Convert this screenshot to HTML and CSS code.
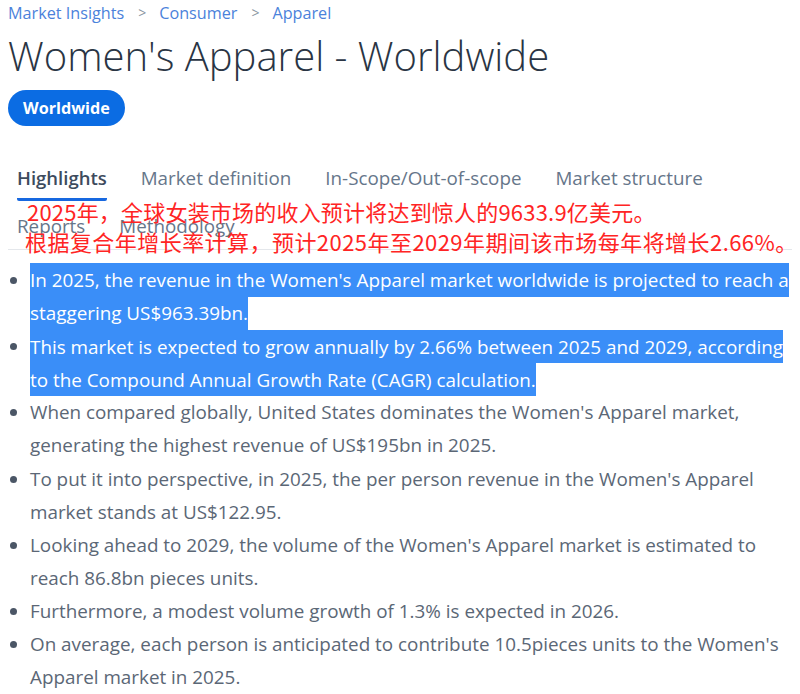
FILE: index.html
```html
<!DOCTYPE html>
<html lang="en">
<head>
<meta charset="utf-8">
<title>Women's Apparel - Worldwide</title>
<link rel="stylesheet" href="styles.css">
</head>
<body>
<div class="page">
  <nav class="crumbs">
    <a class="crumb" href="#">Market Insights</a>
    <span class="sep">&gt;</span>
    <a class="crumb" href="#">Consumer</a>
    <span class="sep">&gt;</span>
    <a class="crumb" href="#">Apparel</a>
  </nav>
  <h1 class="title">Women's Apparel - Worldwide</h1>
  <button class="pill">Worldwide</button>

  <div class="tabs-wrap">
    <ul class="tabs">
      <li class="tab active">Highlights</li>
      <li class="tab">Market definition</li>
      <li class="tab">In-Scope/Out-of-scope</li>
      <li class="tab">Market structure</li>
      <li class="tab">Reports</li>
      <li class="tab">Methodology</li>
    </ul>
    <div class="overlay">
      <div class="ov-line ov-1">2025年，全球女装市场的收入预计将达到惊人的9633.9亿美元。</div>
      <div class="ov-line ov-2">根据复合年增长率计算，预计2025年至2029年期间该市场每年将增长2.66%。</div>
    </div>
  </div>

  <ul class="facts">
    <li><span class="sel">In 2025, the revenue in the Women's Apparel market worldwide is projected to reach a staggering US$963.39bn.</span></li>
    <li><span class="sel">This market is expected to grow annually by 2.66% between 2025 and 2029, according to the Compound Annual Growth Rate (CAGR) calculation.</span></li>
    <li>When compared globally, United States dominates the Women's Apparel market, generating the highest revenue of US$195bn in 2025.</li>
    <li>To put it into perspective, in 2025, the per person revenue in the Women's Apparel market stands at US$122.95.</li>
    <li>Looking ahead to 2029, the volume of the Women's Apparel market is estimated to reach 86.8bn pieces units.</li>
    <li>Furthermore, a modest volume growth of 1.3% is expected in 2026.</li>
    <li>On average, each person is anticipated to contribute 10.5pieces units to the Women's Apparel market in 2025.</li>
  </ul>
</div>
</body>
</html>
```

FILE: styles.css
```css
html, body {
  margin: 0;
  padding: 0;
  background: #ffffff;
}

body {
  font-family: "Open Sans", "Noto Sans", sans-serif;
  color: #5b6776;
}

.page {
  padding: 0 8px;
}

.crumbs {
  display: flex;
  align-items: center;
  height: 26px;
  font-size: 16.2px;
  line-height: 26px;
}

.crumb {
  color: #4b82db;
  text-decoration: none;
}

.sep {
  color: #8a96a3;
  font-size: 14px;
  margin: 0 13px 0 14px;
}

.title {
  margin: 4px 0 0;
  font-size: 40px;
  font-weight: 300;
  line-height: 52px;
  color: #2a3544;
}

.pill {
  display: block;
  margin-top: 8px;
  height: 36px;
  padding: 0 15px;
  border: none;
  border-radius: 18px;
  background: #0b6ce3;
  color: #ffffff;
  font-family: "Open Sans", sans-serif;
  font-size: 16.2px;
  font-weight: 700;
  line-height: 36px;
}

.tabs-wrap {
  position: relative;
  margin-top: 30px;
  border-bottom: 1px solid #e4e7eb;
}

.tabs {
  list-style: none;
  margin: 0;
  padding: 0 0 0 9px;
  display: flex;
  flex-wrap: wrap;
  column-gap: 34px;
  row-gap: 3px;
}

.tab {
  padding: 8px 0 6px;
  line-height: 28px;
  font-size: 18.8px;
  color: #66768a;
  border-bottom: 3px solid transparent;
}

.tab.active {
  font-size: 18.5px;
  color: #3d4b5d;
  font-weight: 600;
  border-bottom-color: #1768e0;
  border-radius: 0 0 2px 2px;
}

.overlay {
  position: absolute;
  left: 19px;
  top: 40px;
  color: #ff2424;
  font-family: "Noto Sans CJK SC", "Noto Sans", sans-serif;
  font-size: 22px;
  line-height: 30px;
  white-space: nowrap;
}

.ov-1 {
  letter-spacing: 0.2px;
}

.ov-2 {
  margin-left: -2px;
  letter-spacing: 0.45px;
}

.facts {
  margin: 14px 0 0;
  padding: 0 0 0 22px;
  font-size: 18.85px;
  line-height: 33.1px;
  color: #5b6776;
}

.facts li::marker {
  color: #4b5666;
}

.sel {
  background: #3a8ef8;
  color: #ffffff;
  padding: 3.7px 0;
}
```
